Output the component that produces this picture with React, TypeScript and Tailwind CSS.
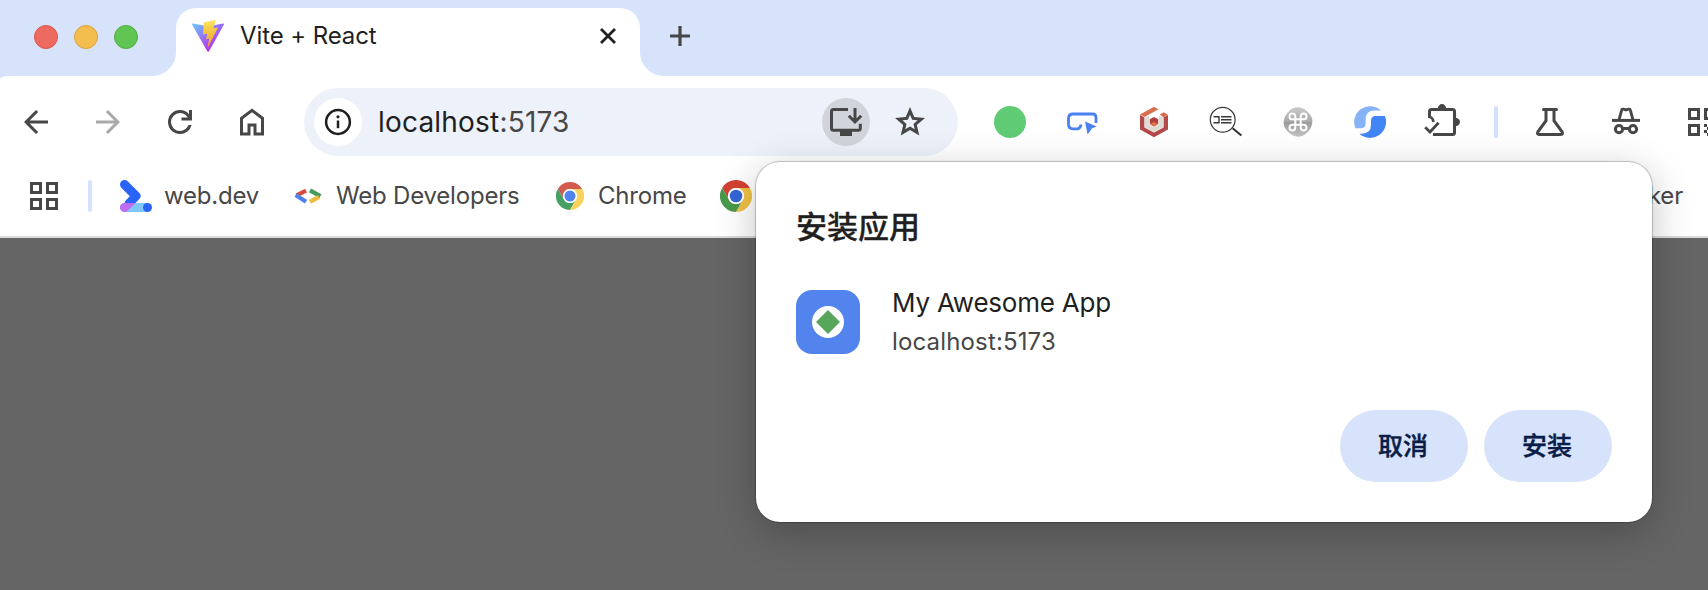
import React, { type ReactNode } from "react";

function MaterialIcon({ d, className = "text-[#474747]" }: { d: string; className?: string }) {
  return (
    <svg viewBox="0 -960 960 960" className={`size-9 ${className}`} fill="currentColor">
      <path d={d} />
    </svg>
  );
}

function Drawing({ children, className = "" }: { children: ReactNode; className?: string }) {
  return (
    <svg viewBox="0 0 36 36" className={`size-9 shrink-0 ${className}`} fill="none">
      {children}
    </svg>
  );
}

function Slot({ children }: { children: ReactNode }) {
  return <div className="flex w-[72px] shrink-0 items-center justify-center">{children}</div>;
}

function WideSlot({ children }: { children: ReactNode }) {
  return <div className="flex w-[76px] shrink-0 items-center justify-center">{children}</div>;
}

function ViteLogo() {
  return (
    <svg viewBox="0 0 256 257" className="size-8">
      <defs>
        <linearGradient id="viteBody" x1="-.828%" x2="57.636%" y1="7.652%" y2="78.411%">
          <stop offset="0%" stopColor="#6cc4fa" />
          <stop offset="100%" stopColor="#b03df0" />
        </linearGradient>
        <linearGradient id="viteBolt" x1="43.376%" x2="50.316%" y1="2.242%" y2="89.03%">
          <stop offset="0%" stopColor="#fbe66e" />
          <stop offset="20%" stopColor="#f9d64f" />
          <stop offset="100%" stopColor="#f0a530" />
        </linearGradient>
      </defs>
      <path
        fill="url(#viteBody)"
        d="M255.153 37.938L134.897 252.976c-2.483 4.44-8.862 4.466-11.382.048L.875 37.958c-2.746-4.814 1.371-10.646 6.827-9.67l120.385 21.517a6.537 6.537 0 0 0 2.322-.004l117.867-21.483c5.438-.991 9.574 4.796 6.877 9.62Z"
      />
      <path
        fill="url(#viteBolt)"
        d="M185.432.063L96.44 17.501a3.268 3.268 0 0 0-2.634 3.014l-5.474 92.456a3.268 3.268 0 0 0 3.997 3.378l24.777-5.718c2.318-.535 4.413 1.507 3.936 3.838l-7.361 36.047c-.495 2.426 1.782 4.5 4.151 3.78l15.304-4.649c2.372-.72 4.652 1.36 4.15 3.788l-11.698 56.621c-.732 3.542 3.979 5.473 5.943 2.437l1.313-2.028l72.516-144.72c1.215-2.423-.88-5.186-3.54-4.672l-25.505 4.922c-2.396.462-4.435-1.77-3.759-4.114l16.646-57.705c.677-2.35-1.37-4.583-3.769-4.113Z"
      />
    </svg>
  );
}

function ChromeLogo({ className, red, green, yellow, blue }: { className: string; red: string; green: string; yellow: string; blue: string }) {
  return (
    <svg viewBox="0 0 48 48" className={className}>
      <path fill={red} d="M3.2 12A24 24 0 0 1 44.8 12H24A12 12 0 0 0 13.6 30Z" />
      <path fill={green} d="M3.2 12A24 24 0 0 0 24 48L34.4 30A12 12 0 0 1 13.6 30Z" />
      <path fill={yellow} d="M44.8 12A24 24 0 0 1 24 48L34.4 30A12 12 0 0 0 24 12Z" />
      <circle cx="24" cy="24" r="12" fill="#fff" />
      <circle cx="24" cy="24" r="9.4" fill={blue} />
    </svg>
  );
}

function TabStrip() {
  return (
    <div className="flex h-[76px] bg-[#d7e2fb] pt-2">
      <div className="flex w-[176px] shrink-0 items-end justify-between">
        <div className="flex gap-4 self-start pl-[34px] pt-[17px]">
          <span className="size-6 rounded-full border border-[#d9564b] bg-[#ec6a5f]" />
          <span className="size-6 rounded-full border border-[#d9a13c] bg-[#f4be4f]" />
          <span className="size-6 rounded-full border border-[#4fae41] bg-[#61c554]" />
        </div>
        <svg viewBox="0 0 24 24" className="size-6" fill="#fff">
          <path d="M24 0V24H0A24 24 0 0 0 24 0Z" />
        </svg>
      </div>
      <div className="flex w-[464px] shrink-0 items-start rounded-t-[20px] bg-white pl-4 pr-[18px] pt-3">
        <ViteLogo />
        <span className="ml-4 h-8 grow text-[24px] leading-8 tracking-[-0.1px] text-[#1f1f1f]">Vite + React</span>
        <Drawing className="-mr-1 -mt-0.5">
          <path d="M11 11L25 25M25 11L11 25" stroke="#1f1f1f" strokeWidth="2.8" />
        </Drawing>
      </div>
      <svg viewBox="0 0 24 24" className="size-6 self-end" fill="#fff">
        <path d="M0 0V24H24A24 24 0 0 1 0 0Z" />
      </svg>
      <Drawing className="-ml-0.5 mt-2.5">
        <path d="M18 8V28M8 18H28" stroke="#474747" strokeWidth="3.2" />
      </Drawing>
    </div>
  );
}

function Omnibox() {
  return (
    <div className="ml-4 flex h-[68px] w-[654px] shrink-0 items-center rounded-full bg-[#edf2fa] pl-2.5 pr-[30px]">
      <span className="flex size-12 items-center justify-center rounded-full bg-white">
        <Drawing>
          <circle cx="18" cy="18" r="11.9" stroke="#1f1f1f" strokeWidth="2.5" />
          <path d="M18 16.5V24.2" stroke="#1f1f1f" strokeWidth="2.5" />
          <circle cx="18" cy="12.8" r="1.6" fill="#1f1f1f" />
        </Drawing>
      </span>
      <span className="ml-4 grow text-[28px] leading-9 tracking-[0.2px] text-[#474747]">
        <span className="text-[#1f1f1f]">localhost</span>:5173
      </span>
      <span className="flex size-12 items-center justify-center rounded-full bg-[#d1d4da]">
        <Drawing>
          <path d="M20 5.5H5.5Q3.5 5.5 3.5 7.5V24.3Q3.5 26.3 5.5 26.3H30.3Q32.3 26.3 32.3 24.3V19.7" stroke="#474747" strokeWidth="3" />
          <path d="M12 26H24V32H12Z" fill="#474747" />
          <path d="M27 4V17.5M20.8 11.8L27 18L33.2 11.8" stroke="#474747" strokeWidth="3" />
        </Drawing>
      </span>
      <span className="ml-[22px]">
        <MaterialIcon d="m354-287 126-76 126 77-33-144 111-96-146-13-58-136-58 135-146 13 111 97-33 143ZM233-120l65-281L80-590l288-25 112-265 112 265 288 25-218 189 65 281-247-149-247 149Z" />
      </span>
    </div>
  );
}

function Extensions() {
  return (
    <div className="ml-4 flex shrink-0">
      <Slot>
        <span className="size-8 rounded-full bg-[#5fcb74]" />
      </Slot>
      <Slot>
        <Drawing>
          <path d="M32 19V13.5Q32 10 28.5 10H9Q4.5 10 4.5 14.5V20Q4.5 24.8 9 24.8H13Q16.3 24.8 17 20.5" stroke="#4a80f0" strokeWidth="2.8" />
          <path d="M21 17.5L32.6 22.4L27.8 24.6L23.6 30.4Z" fill="#4a80f0" />
        </Drawing>
      </Slot>
      <Slot>
        <Drawing>
          <path d="M4 11L8.5 13.5V23.5L18 28.5L27.5 23.5V13.5L32 11V25.5L18 33.3L4 25.5Z" fill="#b4494b" />
          <path d="M4 10.5L18 2.7L22.5 5.2L8.5 13Z" fill="#d96f50" />
          <path d="M23.8 10.5L27.8 8.3L32 10.7L27.5 13.4Z" fill="#d96f50" />
          <path d="M8.5 14L13 11.5V20.5L18 23.3L23 20.5V11.5L27.5 14V23.2L18 28.5L8.5 23.2Z" fill="#dedbd5" />
          <path d="M18 13L22.2 15.3V20L18 22.4L13.8 20V15.3Z" fill="#ad3f40" />
          <path d="M13.8 20L18 17.7L22.2 20L18 22.4Z" fill="#e1714c" />
        </Drawing>
      </Slot>
      <Slot>
        <Drawing>
          <circle cx="14.7" cy="15.8" r="12.4" stroke="#383838" strokeWidth="1.2" />
          <path d="M24.6 24.2L33.4 31.6" stroke="#303030" strokeWidth="2" />
          <path d="M5.5 12.7H11V18.7H5.5M13 12.7H23.5M13 15.7H23.5M13 18.7H23.5" stroke="#383838" strokeWidth="1.4" />
        </Drawing>
      </Slot>
      <Slot>
        <Drawing>
          <defs>
            <linearGradient id="badge" x1="0" y1="0" x2="0" y2="1">
              <stop offset="0" stopColor="#c9c9c9" />
              <stop offset=".5" stopColor="#a9a9a9" />
              <stop offset=".51" stopColor="#9b9b9b" />
              <stop offset="1" stopColor="#c4c4c4" />
            </linearGradient>
          </defs>
          <path d="M18 3.3Q23 3.3 28 8.2T32.3 18Q32.3 22.8 28 27.8T18 32.7Q13 32.7 8 27.8T3.7 18Q3.7 13.2 8 8.2T18 3.3Z" fill="url(#badge)" />
          <path d="M15.3 15.3H20.7V20.7H15.3ZM15.3 15.3V12.4A2.9 2.9 0 1 0 12.4 15.3ZM20.7 15.3H23.6A2.9 2.9 0 1 0 20.7 12.4ZM20.7 20.7V23.6A2.9 2.9 0 1 0 23.6 20.7ZM15.3 20.7H12.4A2.9 2.9 0 1 0 15.3 23.6Z" stroke="#fff" strokeWidth="2" />
        </Drawing>
      </Slot>
      <Slot>
        <Drawing>
          <path d="M29 6.4A16 16 0 0 0 3.4 24.3H8.8Q13.6 24.3 13.6 19.5V15.5Q13.6 6.4 22.7 6.4Z" fill="#86b2f8" />
          <path d="M33 12.1A16 16 0 0 1 7.4 29.8H9.8Q19 29.8 19 20.6V16.9Q19 12.1 23.8 12.1Z" fill="#4285f4" />
        </Drawing>
      </Slot>
      <Slot>
        <Drawing>
          <path d="M5.5 14V7.5Q5.5 5.5 7.5 5.5H28.5Q30.5 5.5 30.5 7.5V28.5Q30.5 30.5 28.5 30.5H9" stroke="#474747" strokeWidth="3" />
          <path d="M5.4 12.6Q9.2 14 9.5 17.8" stroke="#474747" strokeWidth="2.6" />
          <path d="M13.8 5A4.2 5 0 0 1 22.2 5ZM31 13.8A5 4.2 0 0 1 31 22.2Z" fill="#474747" />
          <path d="M1.2 23.2L6 28L14.6 18.8" stroke="#474747" strokeWidth="2.8" />
        </Drawing>
      </Slot>
    </div>
  );
}

function Toolbar() {
  return (
    <div className="flex h-[92px] items-center overflow-hidden">
      <Slot>
        <MaterialIcon d="m313-440 224 224-57 56-320-320 320-320 57 56-224 224h487v80H313Z" />
      </Slot>
      <Slot>
        <MaterialIcon className="text-[#a9a9a9]" d="M647-440H160v-80h487L423-744l57-56 320 320-320 320-57-56 224-224Z" />
      </Slot>
      <Slot>
        <MaterialIcon d="M480-160q-134 0-227-93t-93-227q0-134 93-227t227-93q69 0 132 28.5T720-690v-110h80v280H520v-80h168q-32-56-87.5-88T480-720q-100 0-170 70t-70 170q0 100 70 170t170 70q77 0 139-44t87-116h84q-28 106-114 173t-196 67Z" />
      </Slot>
      <Slot>
        <MaterialIcon d="M240-200h120v-240h240v240h120v-360L480-740 240-560v360Zm-80 80v-480l320-240 320 240v480H520v-240h-80v240H160Z" />
      </Slot>
      <Omnibox />
      <Extensions />
      <span className="ml-4 h-8 w-1 shrink-0 rounded-full bg-[#d3e1fc]" />
      <div className="ml-3.5 flex shrink-0">
        <WideSlot>
          <Drawing>
            <path d="M11.5 5.5H24.5" stroke="#474747" strokeWidth="3" strokeLinecap="round" />
            <path d="M14 5.5V16.7L5.9 27.8Q4.6 30.5 7.3 30.5H28.7Q31.4 30.5 30.1 27.8L22 16.7V5.5" stroke="#474747" strokeWidth="3" />
          </Drawing>
        </WideSlot>
        <WideSlot>
          <Drawing>
            <path d="M4 16.4H32" stroke="#474747" strokeWidth="3" />
            <path d="M11 15.8L13.6 6.3Q14 4.7 15.6 5.2L18 5.9L20.4 5.2Q22 4.7 22.4 6.3L25 15.8" stroke="#474747" strokeWidth="2.9" />
            <circle cx="11" cy="25.2" r="3.6" stroke="#474747" strokeWidth="3" />
            <circle cx="25" cy="25.2" r="3.6" stroke="#474747" strokeWidth="3" />
            <path d="M14 24.5H22" stroke="#474747" strokeWidth="3" />
          </Drawing>
        </WideSlot>
        <WideSlot>
          <Drawing>
            <path d="M5.5 5.5H14.5V14.5H5.5ZM5.5 21.5H14.5V30.5H5.5ZM21.5 5.5H30.5V14.5H21.5Z" stroke="#474747" strokeWidth="3" />
            <path d="M20 20H23V23H20ZM23 23H26V26H23ZM20 26H23V29H20ZM23 29H26V32H23ZM26 20H29V23H26Z" fill="#474747" />
          </Drawing>
        </WideSlot>
      </div>
    </div>
  );
}

function BookmarksBar() {
  return (
    <div className="flex h-[70px] items-center border-b-2 border-[#dadada] pb-3 pl-[30px] pr-[25px] text-[24px] leading-8 tracking-[-0.2px] text-[#474747]">
      <svg viewBox="0 0 28 28" className="size-7 shrink-0" fill="none" stroke="#474747" strokeWidth="3">
        <path d="M1.5 1.5H10.5V10.5H1.5ZM17.5 1.5H26.5V10.5H17.5ZM1.5 17.5H10.5V26.5H1.5ZM17.5 17.5H26.5V26.5H17.5Z" />
      </svg>
      <span className="ml-[30px] h-8 w-1 rounded-full bg-[#d6e2fb]" />
      <svg viewBox="0 0 32 32" className="ml-7 size-8 shrink-0">
        <path d="M12 23H27.5V32H4Z" fill="#80c8fa" />
        <path d="M4.5 4.5L16 16L9 23.5" stroke="#2a64f6" strokeWidth="9" fill="none" strokeLinejoin="round" strokeLinecap="round" />
        <path d="M4.5 23H27.5V32H4.5A4.5 4.5 0 1 1 4.5 23Z" fill="#80c8fa" />
        <path d="M4.5 23H15.5L7 31.2A4.5 4.5 0 1 1 4.5 23Z" fill="#c06bf0" />
        <circle cx="27.5" cy="27.5" r="4.5" fill="#2a64f6" />
      </svg>
      <span className="ml-3 w-[94px] whitespace-nowrap">web.dev</span>
      <svg viewBox="0 0 28 16" className="ml-9 h-4 w-7 shrink-0" fill="none" strokeWidth="4.2">
        <path d="M12 2.6L2.5 7.4" stroke="#d84a3c" />
        <path d="M1.6 7L12 13.8" stroke="#4c82ee" />
        <path d="M16 2.4L26.4 8.2" stroke="#449a5a" />
        <path d="M25 8.8L16 13.8" stroke="#f0b93f" />
      </svg>
      <span className="ml-[14px] w-[184px] whitespace-nowrap">Web Developers</span>
      <ChromeLogo className="ml-9 size-7 shrink-0" red="#d25b4e" green="#45a163" yellow="#fbd35c" blue="#5083ee" />
      <span className="ml-[14px] w-[88px] whitespace-nowrap">Chrome</span>
      <ChromeLogo className="ml-[34px] size-8 shrink-0" red="#d24234" green="#4a994c" yellow="#f0c244" blue="#3367d6" />
      <span className="grow text-right">ker</span>
    </div>
  );
}

function InstallDialog() {
  return (
    <div className="absolute left-[756px] top-[162px] flex h-[360px] w-[896px] flex-col rounded-[24px] bg-white p-10 shadow-[0_0_1px_1px_rgba(0,0,0,0.22),0_10px_40px_rgba(0,0,0,0.24)]">
      <h1 className="-mt-px h-12 text-[31px] font-medium leading-[52px] text-[#1f1f1f] [-webkit-text-stroke:0.3px]">安装应用</h1>
      <div className="mt-[37px] flex">
        <span className="mt-1 flex size-16 items-center justify-center rounded-[16px] bg-[#5384ed]">
          <svg viewBox="0 0 32 32" className="size-8">
            <circle cx="16" cy="16" r="16" fill="#fff" />
            <path d="M16 4L28 16L16 28L4 16Z" fill="#58a55c" />
          </svg>
        </span>
        <div className="ml-8 flex flex-col">
          <span className="h-[38px] text-[26px] leading-[34px] tracking-[-0.22px] text-[#1f1f1f]">My Awesome App</span>
          <span className="h-9 text-[24px] leading-9 tracking-[0.15px] text-[#474747]">localhost:5173</span>
        </div>
      </div>
      <div className="mt-auto flex justify-end gap-4">
        <button className="h-[72px] w-32 rounded-full bg-[#d7e2fb] pr-0.5 pt-0.5 text-[25px] font-medium text-[#0a1d48] [-webkit-text-stroke:0.4px]">取消</button>
        <button className="h-[72px] w-32 rounded-full bg-[#d7e2fb] pr-0.5 pt-0.5 text-[25px] font-medium text-[#0a1d48] [-webkit-text-stroke:0.4px]">安装</button>
      </div>
    </div>
  );
}

export default function App() {
  return (
    <div className="relative flex h-[590px] w-[1708px] flex-col overflow-hidden bg-[#656565] font-['Inter','Noto_Sans_CJK_SC',sans-serif]">
      <TabStrip />
      <div className="bg-[#d7e2fb]">
        <div className="bg-white [border-top-left-radius:8px_3px]">
          <Toolbar />
          <BookmarksBar />
        </div>
      </div>
      <InstallDialog />
    </div>
  );
}
